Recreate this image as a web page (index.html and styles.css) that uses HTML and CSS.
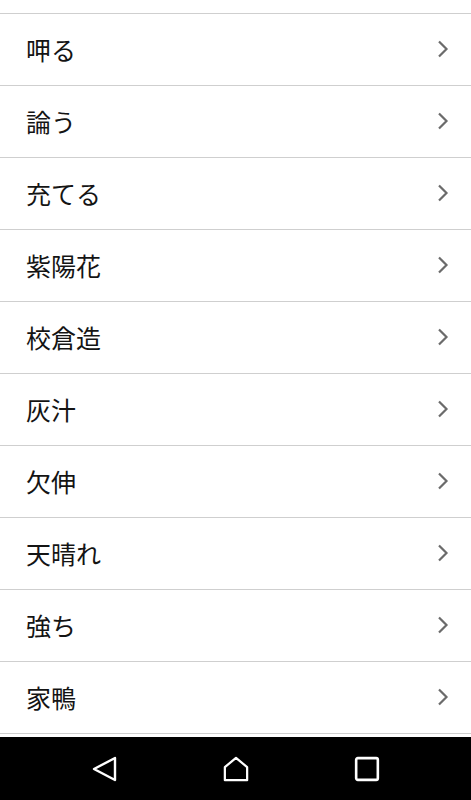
FILE: index.html
```html
<!DOCTYPE html>
<html lang="ja">
<head>
<meta charset="utf-8">
<link rel="stylesheet" href="styles.css">
</head>
<body>
<div class="screen">
  <ul class="list">
    <li class="row"><span class="label">呷る</span><svg class="chev" viewBox="0 0 12 18"><path d="M2 1.5 L9.5 9 L2 16.5"/></svg></li>
    <li class="row"><span class="label">論う</span><svg class="chev" viewBox="0 0 12 18"><path d="M2 1.5 L9.5 9 L2 16.5"/></svg></li>
    <li class="row"><span class="label">充てる</span><svg class="chev" viewBox="0 0 12 18"><path d="M2 1.5 L9.5 9 L2 16.5"/></svg></li>
    <li class="row"><span class="label">紫陽花</span><svg class="chev" viewBox="0 0 12 18"><path d="M2 1.5 L9.5 9 L2 16.5"/></svg></li>
    <li class="row"><span class="label">校倉造</span><svg class="chev" viewBox="0 0 12 18"><path d="M2 1.5 L9.5 9 L2 16.5"/></svg></li>
    <li class="row"><span class="label">灰汁</span><svg class="chev" viewBox="0 0 12 18"><path d="M2 1.5 L9.5 9 L2 16.5"/></svg></li>
    <li class="row"><span class="label">欠伸</span><svg class="chev" viewBox="0 0 12 18"><path d="M2 1.5 L9.5 9 L2 16.5"/></svg></li>
    <li class="row"><span class="label">天晴れ</span><svg class="chev" viewBox="0 0 12 18"><path d="M2 1.5 L9.5 9 L2 16.5"/></svg></li>
    <li class="row"><span class="label">強ち</span><svg class="chev" viewBox="0 0 12 18"><path d="M2 1.5 L9.5 9 L2 16.5"/></svg></li>
    <li class="row"><span class="label">家鴨</span><svg class="chev" viewBox="0 0 12 18"><path d="M2 1.5 L9.5 9 L2 16.5"/></svg></li>
  </ul>
  <div class="spacer"></div>
  <nav class="navbar">
    <svg class="nav-icon" viewBox="0 0 26 26"><path d="M23 2 L2 13 L23 24 Z"/></svg>
    <svg class="nav-icon" viewBox="0 0 28 28"><path d="M2 12 L14 2 L26 12 L26 26 L2 26 Z"/></svg>
    <svg class="nav-icon" viewBox="0 0 24 24"><rect x="2" y="2" width="20" height="20" rx="1.5"/></svg>
  </nav>
</div>
</body>
</html>
```

FILE: styles.css
```css
html, body {
  margin: 0;
  padding: 0;
  background: #ffffff;
}
.screen {
  width: 471px;
  height: 800px;
  display: flex;
  flex-direction: column;
  font-family: "Noto Sans CJK JP", "Noto Sans", sans-serif;
}
.list {
  list-style: none;
  margin: 13px 0 0 0;
  padding: 0;
  border-top: 1px solid #cfcfcf;
}
.row {
  height: 71px;
  border-bottom: 1px solid #cfcfcf;
  display: flex;
  align-items: center;
  justify-content: space-between;
  padding: 0 22px 0 26px;
}
.label {
  font-size: 25px;
  font-weight: 400;
  color: #141414;
  line-height: 1;
  margin-top: -1px;
}
.chev {
  width: 12px;
  height: 18px;
  fill: none;
  stroke: #6b6b6b;
  stroke-width: 2.2;
  margin-top: -1px;
}
.spacer {
  flex: 1;
}
.navbar {
  height: 63px;
  background: #000000;
  display: flex;
  align-items: center;
  justify-content: space-around;
  padding: 0 39px;
}
.nav-icon {
  width: 26px;
  height: 26px;
  fill: none;
  stroke: #ffffff;
  stroke-width: 2.4;
  stroke-linejoin: round;
}
```
